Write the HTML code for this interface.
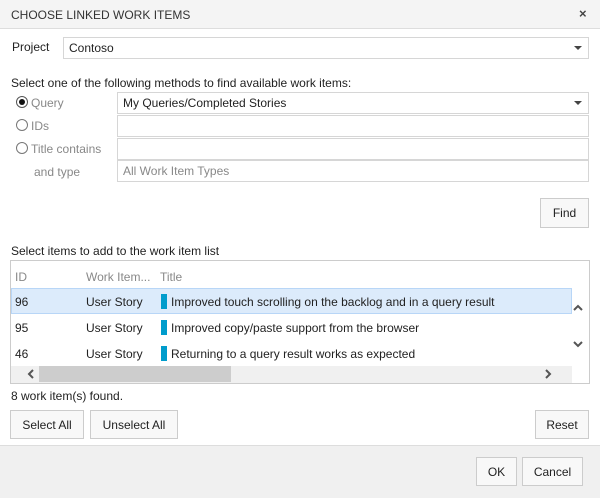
<!DOCTYPE html><html><head><style>
*{box-sizing:border-box}body{margin:0;width:600px;height:498px;font-family:"Liberation Sans",sans-serif;font-size:12px;color:#222;background:#fff;position:relative;overflow:hidden}
.a{position:absolute}
.inp{position:absolute;border:1px solid #d6d6d6;background:#fff;height:22px;padding:3px 5px;font-size:12px}
.btn{position:absolute;border:1px solid #ccc;background:#f8f8f8;font-size:12px;text-align:center;line-height:28px;color:#222}
.caret{position:absolute;right:6px;top:8px;width:0;height:0;border-left:4px solid transparent;border-right:4px solid transparent;border-top:4px solid #444}
.rad{position:absolute;width:12px;height:12px;border:1px solid #555;border-radius:50%}
.gray{color:#888}
.bar{position:absolute;left:161px;width:6px;height:15px;background:#009ccc}
</style></head><body>
<div class="a" style="left:0;top:0;width:600px;height:29px;background:#f4f4f4;border-bottom:1px solid #ddd"></div>
<div class="a" style="left:11px;top:8px;font-size:12px;color:#333">CHOOSE LINKED WORK ITEMS</div>
<div class="a" style="left:579px;top:6px;font-size:13px;font-weight:bold;color:#444">×</div>
<div class="a" style="left:12px;top:40px">Project</div>
<div class="inp" style="left:63px;top:37px;width:526px">Contoso<span class="caret"></span></div>
<div class="a" style="left:11px;top:76px">Select one of the following methods to find available work items:</div>
<div class="rad" style="left:16px;top:96px"><div style="position:absolute;left:2px;top:2px;width:6px;height:6px;border-radius:50%;background:#111"></div></div>
<div class="a gray" style="left:31px;top:96px">Query</div>
<div class="inp" style="left:117px;top:92px;width:472px">My Queries/Completed Stories<span class="caret"></span></div>
<div class="rad" style="left:16px;top:119px;border-color:#777"></div><div class="a gray" style="left:31px;top:119px">IDs</div>
<div class="inp" style="left:117px;top:115px;width:472px"></div>
<div class="rad" style="left:16px;top:142px;border-color:#777"></div><div class="a gray" style="left:31px;top:142px">Title contains</div>
<div class="inp" style="left:117px;top:138px;width:472px"></div>
<div class="a gray" style="left:34px;top:165px">and type</div>
<div class="inp gray" style="left:117px;top:160px;width:472px">All Work Item Types</div>
<div class="btn" style="left:540px;top:198px;width:49px;height:30px">Find</div>
<div class="a" style="left:11px;top:244px">Select items to add to the work item list</div>
<div class="a" style="left:10px;top:260px;width:580px;height:124px;border:1px solid #ccc"></div>
<div class="a gray" style="left:15px;top:270px">ID</div><div class="a gray" style="left:86px;top:270px">Work Item...</div><div class="a gray" style="left:160px;top:270px">Title</div>
<div class="a" style="left:11px;top:288px;width:561px;height:26px;background:#dcebfb;border:1px solid #b8d6f7"></div>
<div class="a" style="left:15px;top:295px">96</div><div class="a" style="left:86px;top:295px">User Story</div><div class="bar" style="top:294px"></div><div class="a" style="left:171px;top:295px">Improved touch scrolling on the backlog and in a query result</div>
<div class="a" style="left:15px;top:321px">95</div><div class="a" style="left:86px;top:321px">User Story</div><div class="bar" style="top:320px"></div><div class="a" style="left:171px;top:321px">Improved copy/paste support from the browser</div>
<div class="a" style="left:15px;top:347px">46</div><div class="a" style="left:86px;top:347px">User Story</div><div class="bar" style="top:346px"></div><div class="a" style="left:171px;top:347px">Returning to a query result works as expected</div>
<div class="a" style="left:11px;top:366px;width:561px;height:17px;background:#f0f0f0"></div>
<div class="a" style="left:39px;top:366px;width:192px;height:16px;background:#cdcdcd"></div>
<svg class="a" style="left:0;top:0" width="600" height="498"><g fill="none" stroke="#555" stroke-width="2"><path d="M33 370l-4 4 4 4"/><path d="M546 370l4 4-4 4"/><path d="M574 310l4-4 4 4"/><path d="M574 342l4 4 4-4"/></g><g stroke="#777"><path d="M588 486l-8 8M588 490l-4 4"/></g></svg>
<div class="a" style="left:11px;top:389px">8 work item(s) found.</div>
<div class="btn" style="left:10px;top:410px;width:74px;height:29px">Select All</div>
<div class="btn" style="left:90px;top:410px;width:88px;height:29px">Unselect All</div>
<div class="btn" style="left:535px;top:410px;width:54px;height:29px">Reset</div>
<div class="a" style="left:0;top:445px;width:600px;height:53px;background:#f0f0f0;border-top:1px solid #ddd"></div>
<div class="btn" style="left:476px;top:457px;width:41px;height:29px">OK</div>
<div class="btn" style="left:522px;top:457px;width:61px;height:29px">Cancel</div>
</body></html>
